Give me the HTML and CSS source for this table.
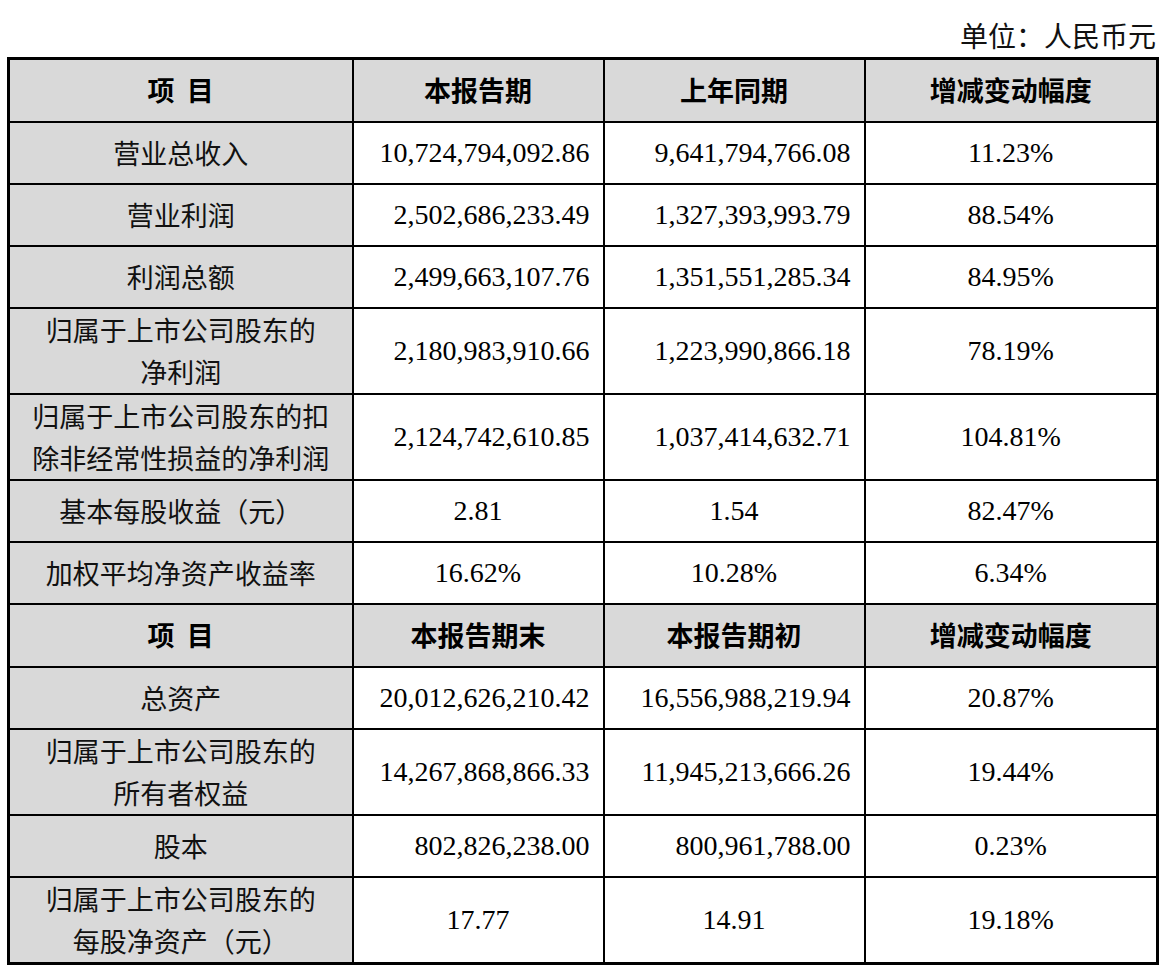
FILE: index.html
```html
<!DOCTYPE html>
<html lang="zh">
<head>
<meta charset="utf-8">
<link rel="stylesheet" href="styles.css">
</head>
<body>
<div class="unit">单位：人民币元</div>
<table class="fin">
  <colgroup>
    <col class="c1"><col class="c2"><col class="c3"><col class="c4">
  </colgroup>
  <tr class="head">
    <th>项&nbsp;&nbsp;目</th><th>本报告期</th><th>上年同期</th><th>增减变动幅度</th>
  </tr>
  <tr class="r1">
    <td class="lbl">营业总收入</td><td class="num">10,724,794,092.86</td><td class="num">9,641,794,766.08</td><td class="ctr">11.23%</td>
  </tr>
  <tr class="r1">
    <td class="lbl">营业利润</td><td class="num">2,502,686,233.49</td><td class="num">1,327,393,993.79</td><td class="ctr">88.54%</td>
  </tr>
  <tr class="r1">
    <td class="lbl">利润总额</td><td class="num">2,499,663,107.76</td><td class="num">1,351,551,285.34</td><td class="ctr">84.95%</td>
  </tr>
  <tr class="r2">
    <td class="lbl">归属于上市公司股东的<br>净利润</td><td class="num">2,180,983,910.66</td><td class="num">1,223,990,866.18</td><td class="ctr">78.19%</td>
  </tr>
  <tr class="r2">
    <td class="lbl">归属于上市公司股东的扣<br>除非经常性损益的净利润</td><td class="num">2,124,742,610.85</td><td class="num">1,037,414,632.71</td><td class="ctr">104.81%</td>
  </tr>
  <tr class="r1">
    <td class="lbl">基本每股收益（元）</td><td class="ctr">2.81</td><td class="ctr">1.54</td><td class="ctr">82.47%</td>
  </tr>
  <tr class="r1">
    <td class="lbl">加权平均净资产收益率</td><td class="ctr">16.62%</td><td class="ctr">10.28%</td><td class="ctr">6.34%</td>
  </tr>
  <tr class="head">
    <th>项&nbsp;&nbsp;目</th><th>本报告期末</th><th>本报告期初</th><th>增减变动幅度</th>
  </tr>
  <tr class="r1">
    <td class="lbl">总资产</td><td class="num">20,012,626,210.42</td><td class="num">16,556,988,219.94</td><td class="ctr">20.87%</td>
  </tr>
  <tr class="r2">
    <td class="lbl">归属于上市公司股东的<br>所有者权益</td><td class="num">14,267,868,866.33</td><td class="num">11,945,213,666.26</td><td class="ctr">19.44%</td>
  </tr>
  <tr class="r1">
    <td class="lbl">股本</td><td class="num">802,826,238.00</td><td class="num">800,961,788.00</td><td class="ctr">0.23%</td>
  </tr>
  <tr class="r2">
    <td class="lbl">归属于上市公司股东的<br>每股净资产（元）</td><td class="ctr">17.77</td><td class="ctr">14.91</td><td class="ctr">19.18%</td>
  </tr>
</table>
</body>
</html>
```

FILE: styles.css
```css
html, body {
  margin: 0;
  padding: 0;
  background: #ffffff;
}
body {
  padding: 0 3px 0 7px;
  font-family: "Liberation Serif", "Times New Roman", Tinos, "DejaVu Serif", serif;
  color: #000;
}
.unit {
  height: 57px;
  box-sizing: border-box;
  padding-top: 18px;
  padding-right: 2px;
  text-align: right;
  font-size: 28px;
  line-height: 34px;
  font-family: "Noto Sans CJK SC", sans-serif;
  color: #111;
}
.fin {
  border-collapse: collapse;
  width: 1149px;
  table-layout: fixed;
  border: 3px solid #000;
}
.c1 { width: 344px; }
.c2 { width: 251px; }
.c3 { width: 261px; }
.c4 { width: 293px; }
.fin th, .fin td {
  border: 2px solid #000;
  padding: 0;
  font-size: 28px;
  line-height: 42px;
  vertical-align: middle;
}
.fin td {
  font-family: "Liberation Serif", "Times New Roman", Tinos, serif;
}
.fin th {
  background: #d9d9d9;
  font-family: "Noto Sans CJK SC", sans-serif;
  font-weight: 700;
  text-align: center;
  font-size: 27px;
}
.head { height: 63px; }
.r1 { height: 62px; }
.r2 { height: 85px; }
.fin td.lbl {
  background: #d9d9d9;
  text-align: center;
  font-family: "Noto Sans CJK SC", sans-serif;
  font-weight: 400;
  font-size: 27px;
  color: #111;
}
.fin td.num {
  text-align: right;
  padding-right: 13px;
}
.fin td.ctr {
  text-align: center;
}
```
